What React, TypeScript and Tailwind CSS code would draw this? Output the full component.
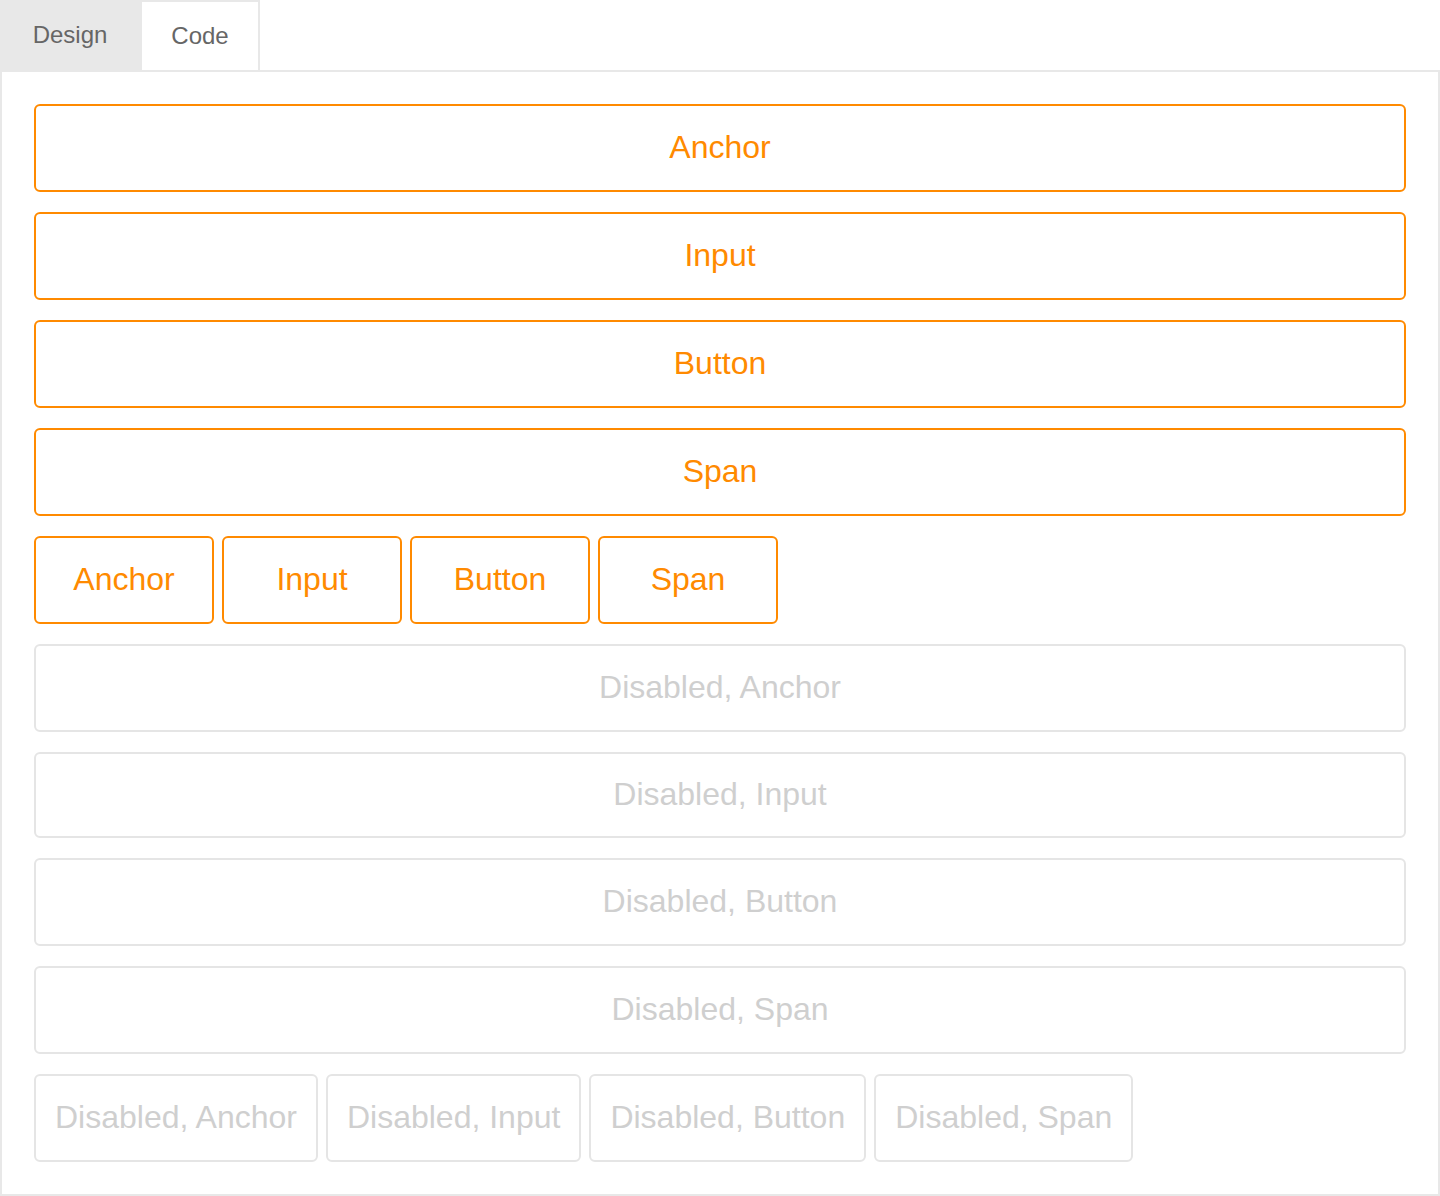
const full = ["Anchor", "Input", "Button", "Span"];

export default function App() {
  return (
    <div className="bg-white text-[32px]" style={{ fontFamily: '"Liberation Sans", Arial, sans-serif' }}>
      {/* Tabs */}
      <div className="flex h-[70px] text-[24px] text-[#666]">
        <div className="w-[140px] bg-[#e8e8e8] flex items-center justify-center">Design</div>
        <div className="w-[120px] bg-white border-2 border-b-0 border-[#e8e8e8] flex items-center justify-center">Code</div>
      </div>

      {/* Panel */}
      <div className="border-2 border-[#e8e8e8] p-8 flex flex-col gap-5">
        {full.map((label) => (
          <div
            key={label}
            className="h-[88px] pb-[2px] border-2 border-[#ff8a00] rounded-[6px] text-[#ff8a00] flex items-center justify-center"
          >
            {label}
          </div>
        ))}

        <div className="flex gap-2">
          {full.map((label) => (
            <div
              key={label}
              className="w-[180px] h-[88px] pb-[2px] border-2 border-[#ff8a00] rounded-[6px] text-[#ff8a00] flex items-center justify-center"
            >
              {label}
            </div>
          ))}
        </div>

        {full.map((label) => (
          <div
            key={label}
            className={`${label === "Input" ? "h-[86px]" : "h-[88px]"} pb-[2px] border-2 border-[#e5e5e5] rounded-[6px] text-[#cfcfcf] flex items-center justify-center`}
          >
            Disabled, {label}
          </div>
        ))}

        <div className="flex gap-2">
          {full.map((label) => (
            <div
              key={label}
              className="h-[88px] pb-[2px] px-[19px] border-2 border-[#e5e5e5] rounded-[6px] text-[#cfcfcf] flex items-center justify-center"
            >
              Disabled, {label}
            </div>
          ))}
        </div>
      </div>
    </div>
  );
}
